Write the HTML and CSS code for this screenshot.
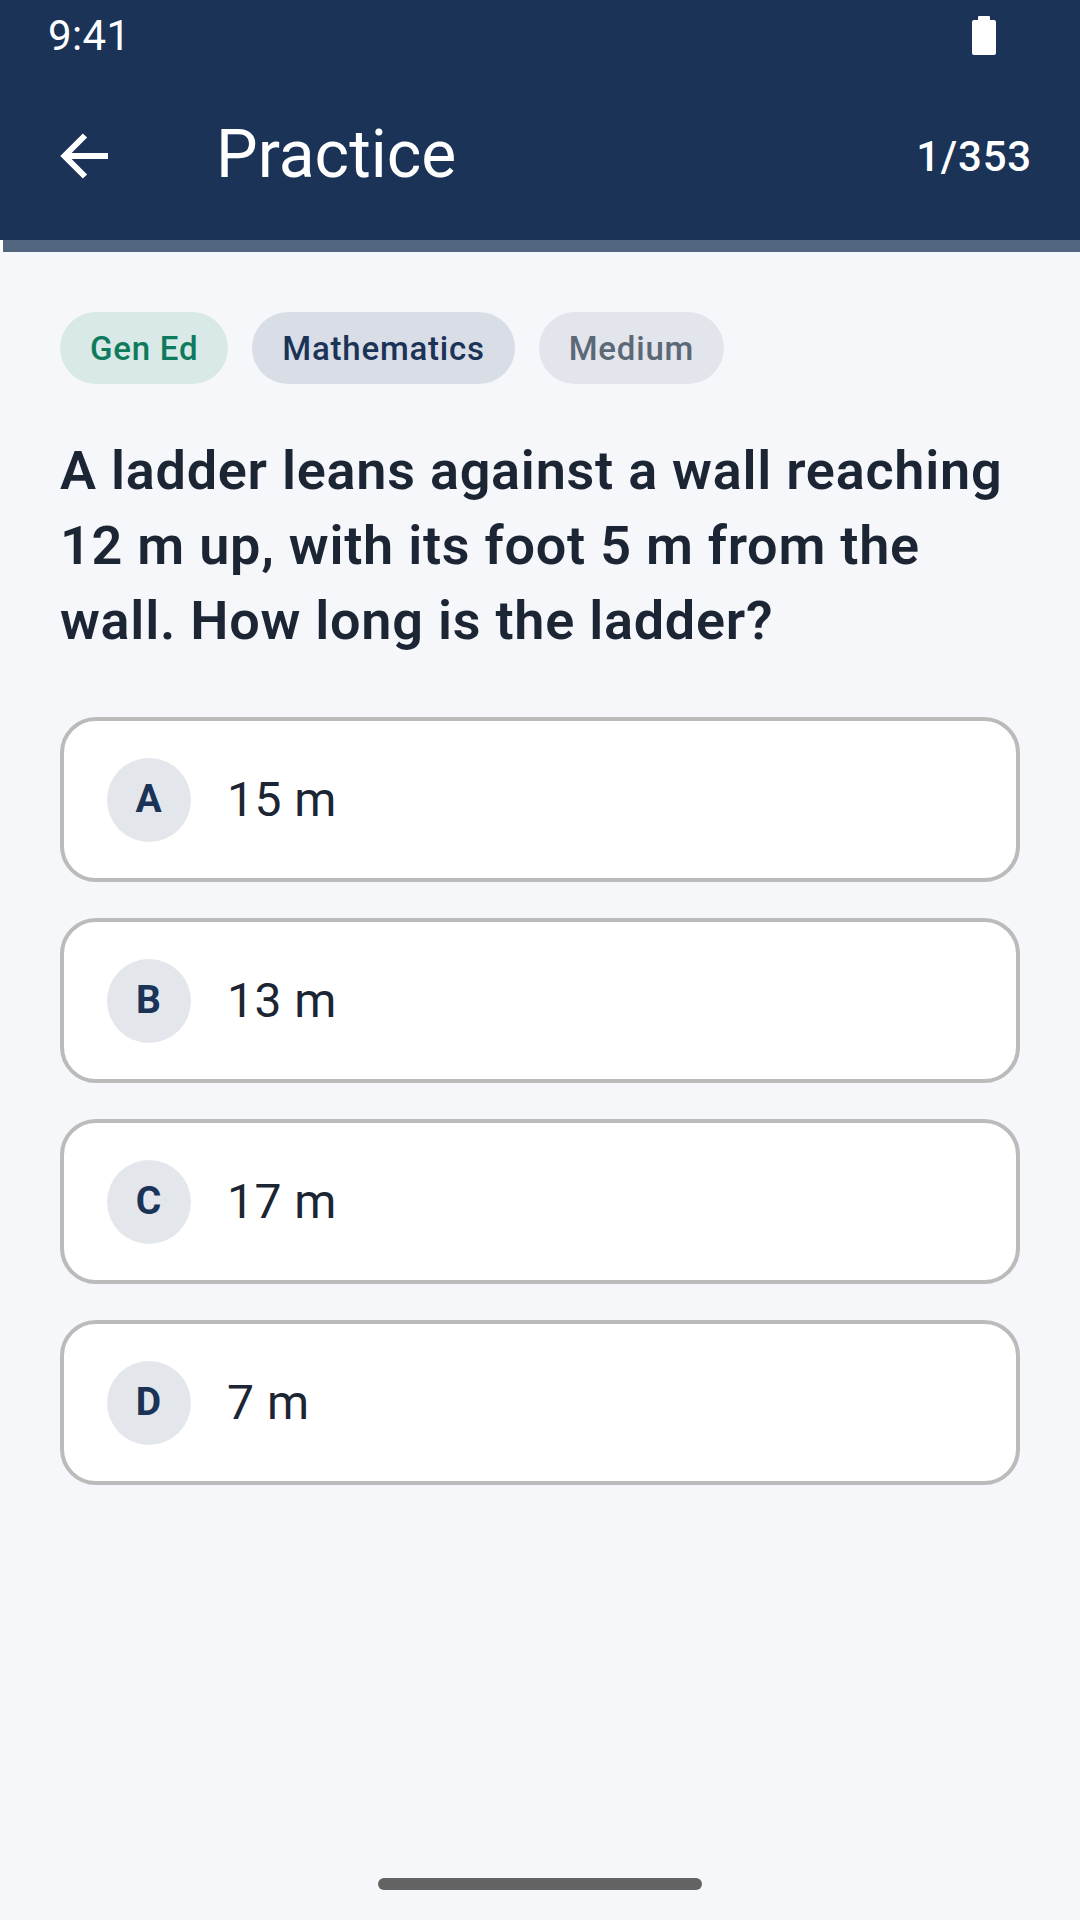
FILE: index.html
```html
<!DOCTYPE html>
<html lang="en">
<head>
<meta charset="utf-8">
<title>Practice</title>
<link rel="stylesheet" href="styles.css">
</head>
<body>
<div class="screen">
  <header class="header">
    <div class="status">
      <span class="time">9:41</span>
      <svg class="battery" width="24" height="39" viewBox="0 0 24 39"><path d="M7 0h10a1 1 0 0 1 1 1v3h4a2 2 0 0 1 2 2v31a2 2 0 0 1-2 2H2a2 2 0 0 1-2-2V6a2 2 0 0 1 2-2h4V1a1 1 0 0 1 1-1z" fill="#fff"/></svg>
    </div>
    <div class="appbar">
      <svg class="back" width="48" height="48" viewBox="0 0 48 48"><path d="M48 24H6M25 3.500 4.500 24 25 44.500" fill="none" stroke="#fff" stroke-width="6"/></svg>
      <h1 class="title">Practice</h1>
      <span class="count">1/353</span>
    </div>
  </header>
  <div class="progress"><div class="progress-fill"></div></div>
  <main class="content">
    <div class="chips">
      <span class="chip chip-green">Gen Ed</span>
      <span class="chip chip-navy">Mathematics</span>
      <span class="chip chip-gray">Medium</span>
    </div>
    <p class="question">A ladder leans against a wall reaching 12 m up, with its foot 5 m from the wall. How long is the ladder?</p>
    <div class="options">
      <div class="option"><span class="letter">A</span><span class="answer">15 m</span></div>
      <div class="option"><span class="letter">B</span><span class="answer">13 m</span></div>
      <div class="option"><span class="letter">C</span><span class="answer">17 m</span></div>
      <div class="option"><span class="letter">D</span><span class="answer">7 m</span></div>
    </div>
  </main>
  <div class="home-row"><div class="home-bar"></div></div>
</div>
</body>
</html>
```
FILE: styles.css
```css
* { box-sizing: border-box; }
html, body { margin: 0; padding: 0; }
body { background: #f5f7fb; font-family: Roboto, "Noto Sans", sans-serif; }
.screen { width: 1080px; height: 1920px; display: flex; flex-direction: column; background: #f5f7fb; overflow: hidden; }
.header { height: 240px; background: #1a3357; color: #fff; display: flex; flex-direction: column; }
.status { height: 72px; padding: 0 84px 0 48px; display: flex; align-items: center; justify-content: space-between; }
.time { font-size: 42px; line-height: 72px; font-weight: 400; letter-spacing: 0.4px; }
.battery { display: block; margin-top: -1px; }
.appbar { height: 168px; padding: 0 48px 0 60px; display: flex; align-items: center; }
.back { display: block; flex: none; }
.title { margin: -3px 0 0 108px; flex: 1; font-size: 66px; font-weight: 400; line-height: 88px; }
.count { font-size: 42px; font-weight: 500; letter-spacing: 0.8px; }
.progress { height: 12px; background: #53667f; }
.progress-fill { width: 3px; height: 12px; background: #fff; }
.content { flex: 1; padding: 60px 60px 0; }
.chips { display: flex; gap: 24px; }
.chip { height: 72px; padding: 0 30px; border-radius: 36px; display: flex; align-items: center; font-size: 33px; font-weight: 500; letter-spacing: 0.78px; }
.chip-green { background: #d9e9e7; color: #0f7b5c; }
.chip-navy { background: #d9dde6; color: #1a3357; }
.chip-gray { background: #e2e5ec; color: #5b6876; }
.question { margin: 49px 0 0; font-size: 54px; font-weight: 600; line-height: 75px; letter-spacing: 0.75px; color: #1c2533; }
.options { margin-top: 59px; display: flex; flex-direction: column; gap: 36px; }
.option { height: 165px; background: #fff; border: 4px solid #bbbbbb; border-radius: 36px; padding: 0 43px; display: flex; align-items: center; }
.letter { width: 84px; height: 84px; border-radius: 50%; background: #e3e6eb; color: #1a3357; display: flex; align-items: center; justify-content: center; font-size: 39px; font-weight: 700; padding: 0 1px 2px 0; }
.answer { margin-left: 36px; font-size: 48px; letter-spacing: 0.5px; color: #1c2533; }
.home-row { height: 42px; flex: none; display: flex; justify-content: center; }
.home-bar { width: 324px; height: 12px; border-radius: 6px; background: #636363; }
```
